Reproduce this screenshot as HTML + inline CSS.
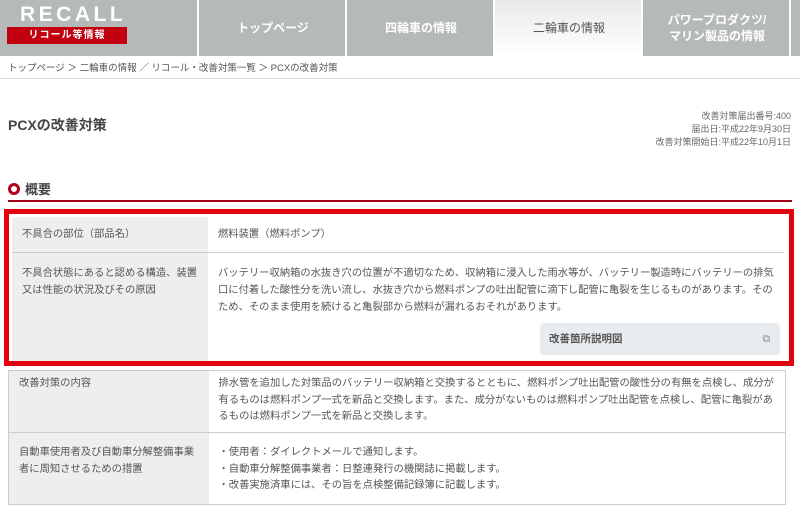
<!DOCTYPE html>
<html><head><meta charset="utf-8"><style>
*{margin:0;padding:0;box-sizing:border-box}
body{width:800px;height:515px;overflow:hidden;background:#fff;font-family:"Liberation Sans","Noto Sans CJK JP",sans-serif;color:#555;font-size:10.3px;position:relative}
.nav{position:absolute;left:0;top:0;width:800px;height:56px;background:#b5b9ba}
.logo{position:absolute;left:20px;top:3px;color:#fff;font-size:21px;letter-spacing:3.5px;font-weight:bold}
.logo2{position:absolute;left:7px;top:27px;width:120px;height:17px;background:#c3000f;color:#fff;font-size:10px;text-align:center;line-height:17px;font-weight:bold;letter-spacing:1px}
.tab{position:absolute;top:0;height:56px;color:#fff;font-size:12px;font-weight:bold;text-align:center;display:flex;align-items:center;justify-content:center;line-height:16px;border-left:2px solid #fff}
.act{background:linear-gradient(#e9e9e9,#fff);color:#555;font-weight:normal}
.bc{position:absolute;left:8px;top:60px;font-size:9.5px;color:#555}
.hr{position:absolute;left:0;top:78px;width:800px;height:1px;background:#ddd}
h1{position:absolute;left:8px;top:115px;font-size:14px;font-weight:bold;color:#444}
.meta{position:absolute;right:9px;top:110px;text-align:right;font-size:9px;line-height:13px;color:#666}
.sec{position:absolute;left:8px;top:179px;font-size:13px;font-weight:bold;color:#444}
.ring{display:inline-block;width:12px;height:12px;border:3px solid #b5001a;border-radius:50%;vertical-align:-1px;margin-right:5px}
.redl{position:absolute;left:8px;top:200px;width:784px;height:2px;background:#a0001a}
.box{position:absolute;left:4px;top:209px;width:790px;height:157px;border:5px solid #e3000f}
table{border-collapse:collapse;position:absolute;font-size:10.3px;line-height:17px;table-layout:fixed}
td{vertical-align:top;padding:9px 8px 9px 10px}
td.l{background:#eeeeee}
.btn{position:absolute;left:540px;top:323px;width:240px;height:32px;background:#e9ecee;border-radius:4px;font-size:10.5px;font-weight:bold;color:#555;line-height:32px;padding-left:9px}
</style></head><body>
<div class="nav">
<div class="logo">RECALL</div><div class="logo2">リコール等情報</div>
<div class="tab" style="left:197px;width:150px">トップページ</div>
<div class="tab" style="left:345px;width:150px">四輪車の情報</div>
<div class="tab act" style="left:493px;width:150px">二輪車の情報</div>
<div class="tab" style="left:641px;width:150px">パワープロダクツ/<br>マリン製品の情報</div>
<div class="tab" style="left:789px;width:11px"></div>
</div>
<div class="bc">トップページ ＞ 二輪車の情報 ／ リコール・改善対策一覧 ＞ PCXの改善対策</div>
<div class="hr"></div>
<h1>PCXの改善対策</h1>
<div class="meta">改善対策届出番号:400<br>届出日:平成22年9月30日<br>改善対策開始日:平成22年10月1日</div>
<div class="sec"><span class="ring"></span>概要</div>
<div class="redl"></div>
<table style="left:12px;top:217px;width:772px">
<colgroup><col style="width:196px"><col></colgroup>
<tr style="border-bottom:1px solid #ccc;height:34px"><td class="l" style="padding-top:9px">不具合の部位（部品名）</td><td style="padding-top:9px">燃料装置（燃料ポンプ）</td></tr>
<tr style="height:109px"><td class="l" style="padding-top:12px">不具合状態にあると認める構造、装置又は性能の状況及びその原因</td><td style="padding-top:12px">バッテリー収納箱の水抜き穴の位置が不適切なため、収納箱に浸入した雨水等が、バッテリー製造時にバッテリーの排気口に付着した酸性分を洗い流し、水抜き穴から燃料ポンプの吐出配管に滴下し配管に亀裂を生じるものがあります。そのため、そのまま使用を続けると亀裂部から燃料が漏れるおそれがあります。</td></tr>
</table>
<div class="btn">改善箇所説明図<span style="position:absolute;right:10px;font-weight:normal;color:#888">⧉</span></div>
<div class="box"></div>
<table style="left:8px;top:370px;width:778px;border:1px solid #ccc;line-height:16.5px">
<colgroup><col style="width:200px"><col></colgroup>
<tr style="border-bottom:1px solid #ccc;height:62px"><td class="l" style="padding-top:5px">改善対策の内容</td><td style="padding-top:5px;padding-bottom:6px">排水管を追加した対策品のバッテリー収納箱と交換するとともに、燃料ポンプ吐出配管の酸性分の有無を点検し、成分が有るものは燃料ポンプ一式を新品と交換します。また、成分がないものは燃料ポンプ吐出配管を点検し、配管に亀裂があるものは燃料ポンプ一式を新品と交換します。</td></tr>
<tr style="height:68px"><td class="l" style="padding-top:12px">自動車使用者及び自動車分解整備事業者に周知させるための措置</td><td style="padding-top:12px">・使用者：ダイレクトメールで通知します。<br>・自動車分解整備事業者：日整連発行の機関誌に掲載します。<br>・改善実施済車には、その旨を点検整備記録簿に記載します。</td></tr>
</table>
</body></html>
